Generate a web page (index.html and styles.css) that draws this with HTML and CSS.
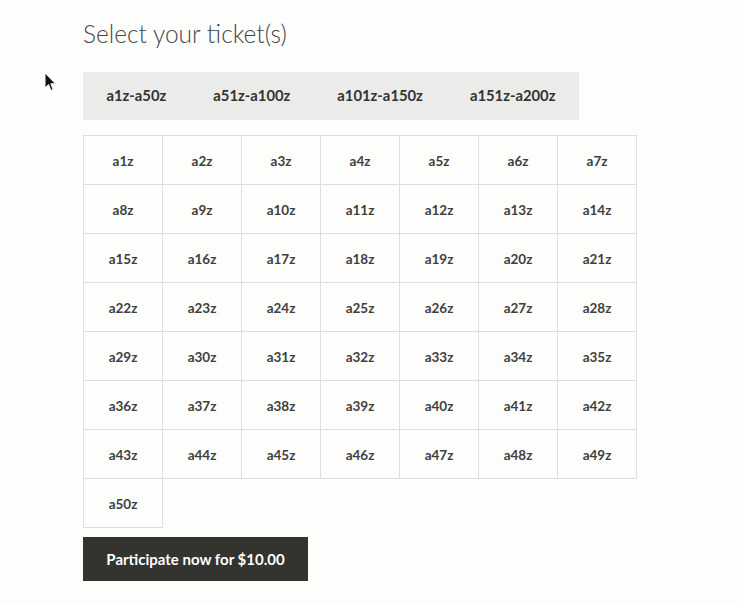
FILE: index.html
```html
<!DOCTYPE html>
<html>
<head>
<meta charset="utf-8">
<link rel="stylesheet" href="styles.css">
</head>
<body>
<div class="page">
  <h2 class="title">Select your ticket(s)</h2>
  <div class="tabs">
    <span class="tab">a1z-a50z</span>
    <span class="tab">a51z-a100z</span>
    <span class="tab">a101z-a150z</span>
    <span class="tab">a151z-a200z</span>
  </div>
  <div class="grid">
    <div class="cell">a1z</div><div class="cell">a2z</div><div class="cell">a3z</div><div class="cell">a4z</div><div class="cell">a5z</div><div class="cell">a6z</div><div class="cell">a7z</div>
    <div class="cell">a8z</div><div class="cell">a9z</div><div class="cell">a10z</div><div class="cell">a11z</div><div class="cell">a12z</div><div class="cell">a13z</div><div class="cell">a14z</div>
    <div class="cell">a15z</div><div class="cell">a16z</div><div class="cell">a17z</div><div class="cell">a18z</div><div class="cell">a19z</div><div class="cell">a20z</div><div class="cell">a21z</div>
    <div class="cell">a22z</div><div class="cell">a23z</div><div class="cell">a24z</div><div class="cell">a25z</div><div class="cell">a26z</div><div class="cell">a27z</div><div class="cell">a28z</div>
    <div class="cell">a29z</div><div class="cell">a30z</div><div class="cell">a31z</div><div class="cell">a32z</div><div class="cell">a33z</div><div class="cell">a34z</div><div class="cell">a35z</div>
    <div class="cell">a36z</div><div class="cell">a37z</div><div class="cell">a38z</div><div class="cell">a39z</div><div class="cell">a40z</div><div class="cell">a41z</div><div class="cell">a42z</div>
    <div class="cell">a43z</div><div class="cell">a44z</div><div class="cell">a45z</div><div class="cell">a46z</div><div class="cell">a47z</div><div class="cell">a48z</div><div class="cell">a49z</div>
    <div class="cell">a50z</div>
  </div>
  <button class="buy">Participate now for $10.00</button>
</div>
<svg class="cursor" width="13" height="20" viewBox="0 0 13 20"><path d="M1 1 L1 16 L4.5 12.5 L7 18.5 L9.2 17.6 L6.8 11.8 L11.5 11.8 Z" fill="#111" stroke="#fff" stroke-width="1"/></svg>
</body>
</html>
```
FILE: styles.css
```css
html, body {
  margin: 0;
  padding: 0;
  background: #fdfdfb;
}
body {
  font-family: Lato, "Open Sans", "Liberation Sans", sans-serif;
  color: #43454b;
  position: relative;
  min-height: 604px;
}
.page {
  padding: 17px 0 0 83px;
}
.title {
  margin: 0;
  font-weight: 300;
  font-size: 24.5px;
  line-height: 34px;
  color: #43454b;
}
.tabs {
  margin-top: 21px;
  display: inline-flex;
  background: #ebebe9;
  height: 48px;
  align-items: center;
}
.tab {
  padding: 0 23.5px 2px;
  font-weight: 700;
  font-size: 14.8px;
  color: #333;
}
.grid {
  margin-top: 15px;
  display: grid;
  grid-template-columns: repeat(7, 79px);
  grid-auto-rows: 49px;
  width: 554px;
  border-top: 1px solid #dedede;
  border-left: 1px solid #dedede;
  box-sizing: border-box;
}
.cell {
  border-right: 1px solid #dedede;
  border-bottom: 1px solid #dedede;
  display: flex;
  align-items: center;
  justify-content: center;
  padding-top: 1px;
  font-size: 13.5px;
  font-weight: 700;
  color: #3f3f3f;
}
.buy {
  display: block;
  margin-top: 9px;
  height: 44px;
  width: 225px;
  padding: 0;
  border: 0;
  background: #33332f;
  color: #fff;
  font-family: inherit;
  font-size: 15px;
  font-weight: 700;
}
.cursor {
  position: absolute;
  left: 44px;
  top: 72px;
}
```
